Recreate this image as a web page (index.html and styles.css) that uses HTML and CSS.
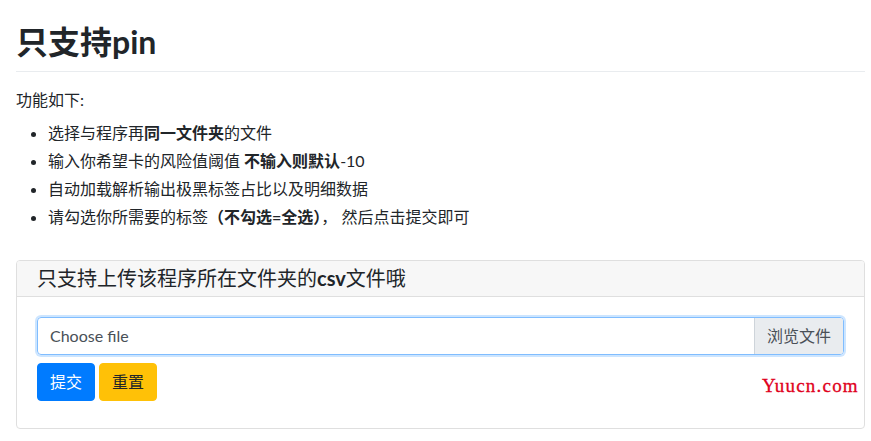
FILE: index.html
```html
<!DOCTYPE html>
<html lang="zh-CN">
<head>
<meta charset="utf-8">
<title>只支持pin</title>
<link rel="stylesheet" href="styles.css">
</head>
<body>
<div class="page">
  <h2 class="title">只支持pin</h2>
  <p class="intro">功能如下:</p>
  <ul class="features">
    <li>选择与程序再<b>同一文件夹</b>的文件</li>
    <li>输入你希望卡的风险值阈值 <b>不输入则默认</b>-10</li>
    <li>自动加载解析输出极黑标签占比以及明细数据</li>
    <li>请勾选你所需要的标签<b>（不勾选=全选）</b>， 然后点击提交即可</li>
  </ul>
  <div class="card">
    <div class="card-header">只支持上传该程序所在文件夹的<b>csv</b>文件哦</div>
    <div class="card-body">
      <div class="file">
        <span class="file-label">Choose file</span>
        <span class="file-btn">浏览文件</span>
      </div>
      <div class="actions">
        <button class="btn btn-primary">提交</button>
        <button class="btn btn-warning">重置</button>
      </div>
    </div>
  </div>
  <span class="watermark">Yuucn.com</span>
</div>
</body>
</html>
```
FILE: styles.css
```css
* { box-sizing: border-box; }
html, body { margin: 0; padding: 0; background: #fff; }
body {
  font-family: Lato, "Noto Sans CJK SC", sans-serif;
  font-size: 16px;
  color: #212529;
}
.page {
  position: relative;
  width: 871px;
  padding: 23px 6px 0 16px;
}
.title {
  margin: 0;
  padding-bottom: 10px;
  font-size: 32px;
  line-height: 38px;
  font-weight: 700;
  border-bottom: 1px solid #e9ecef;
}
.intro {
  margin: 16px 0 0;
  line-height: 24px;
}
.features {
  margin: 7px 0 29px;
  padding-left: 32px;
}
.features li { line-height: 28px; }
.features b { font-weight: 700; }
.card {
  border: 1px solid #dfdfdf;
  border-radius: 4px;
  overflow: hidden;
}
.card-header {
  background: #f7f7f7;
  border-bottom: 1px solid #dfdfdf;
  padding: 0 20px;
  line-height: 35px;
  font-size: 20px;
}
.card-body { padding: 20px 20px 27px; }
.file {
  display: flex;
  height: 38px;
  border: 1px solid #80bdff;
  border-radius: 4px;
  box-shadow: 0 0 0 2px rgba(0, 123, 255, 0.2);
  overflow: hidden;
}
.file-label {
  flex: 1;
  padding: 0 12px;
  line-height: 36px;
  color: #495057;
}
.file-btn {
  padding: 0 12px;
  line-height: 36px;
  background: #e9ecef;
  border-left: 1px solid #ced4da;
  color: #495057;
}
.actions {
  display: flex;
  gap: 4px;
  margin-top: 8px;
}
.btn {
  height: 38px;
  padding: 0 12px;
  border: 1px solid transparent;
  border-radius: 4px;
  font-family: inherit;
  font-size: 16px;
  line-height: 36px;
}
.btn-primary { background: #007bff; border-color: #007bff; color: #fff; }
.btn-warning { background: #ffc107; border-color: #ffc107; color: #212529; }
.watermark {
  position: absolute;
  left: 762px;
  top: 375px;
  font-family: "Liberation Serif", serif;
  font-size: 19px;
  line-height: 22px;
  letter-spacing: 1.2px;
  color: #e0001c;
  -webkit-text-stroke: 0.3px #e0001c;
}
```
